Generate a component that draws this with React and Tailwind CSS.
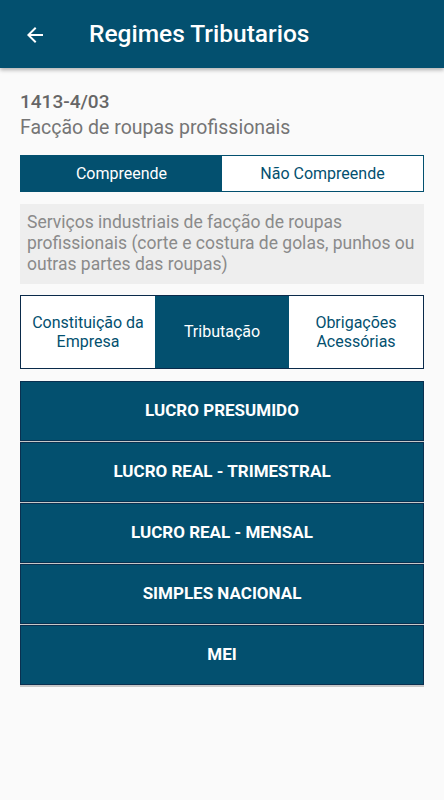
import React from 'react';

const regimes = ['LUCRO PRESUMIDO', 'LUCRO REAL - TRIMESTRAL', 'LUCRO REAL - MENSAL', 'SIMPLES NACIONAL', 'MEI'];

const BackArrow = () => (
  <svg width="24" height="24" viewBox="0 0 24 24" fill="white">
    <path d="M20 11H7.83l5.59-5.59L12 4l-8 8 8 8 1.41-1.41L7.83 13H20v-2z" />
  </svg>
);

export default function App() {
  return (
    <div className="w-[444px] h-[800px] bg-[#fafafa] font-['Roboto',sans-serif] overflow-hidden">
      <div className="h-[68px] bg-[#03506f] flex items-center shadow-[0_2px_4px_rgba(0,0,0,0.3)] relative">
        <div className="ml-[23px] mt-[2px]"><BackArrow /></div>
        <h1 className="ml-[42px] text-white text-[24.5px] font-medium">Regimes Tributarios</h1>
      </div>

      <div className="px-5">
        <div className="mt-[22px] text-[19px] font-medium text-[#666] leading-[24px]">1413-4/03</div>
        <div className="text-[19.5px] text-[#757575] leading-[28px]">Facção de roupas profissionais</div>

        <div className="mt-[13px] flex h-[37px] border border-[#03506f]">
          <div className="flex-1 bg-[#03506f] text-white text-[16px] flex items-center justify-center">Compreende</div>
          <div className="flex-1 bg-white text-[#03506f] text-[16px] flex items-center justify-center">Não Compreende</div>
        </div>

        <div className="mt-[12px] bg-[#eeeeee] pl-[7px] pr-[2px] pt-[8px] pb-[9px] text-[17.5px] leading-[21px] text-[#8a8a8a]">
          Serviços industriais de facção de roupas profissionais (corte e costura de golas, punhos ou outras partes das roupas)
        </div>

        <div className="mt-[11px] grid grid-cols-3 h-[74px] border border-[#0a2a4a]">
          <div className="bg-white text-[#03506f] text-[16px] leading-[19px] flex items-center justify-center text-center">Constituição da<br />Empresa</div>
          <div className="bg-[#03506f] text-white text-[16px] flex items-center justify-center">Tributação</div>
          <div className="bg-white text-[#03506f] text-[16px] leading-[19px] flex items-center justify-center text-center">Obrigações<br />Acessórias</div>
        </div>

        <div className="mt-[12px] flex flex-col">
          {regimes.map((r) => (
            <div key={r} className="h-[60px] bg-[#03506f] border border-[#0a3050] shadow-[0_2px_0_#c8c8c8] mb-[1px] flex items-center justify-center text-white text-[17px] font-bold">
              {r}
            </div>
          ))}
        </div>
      </div>
    </div>
  );
}
